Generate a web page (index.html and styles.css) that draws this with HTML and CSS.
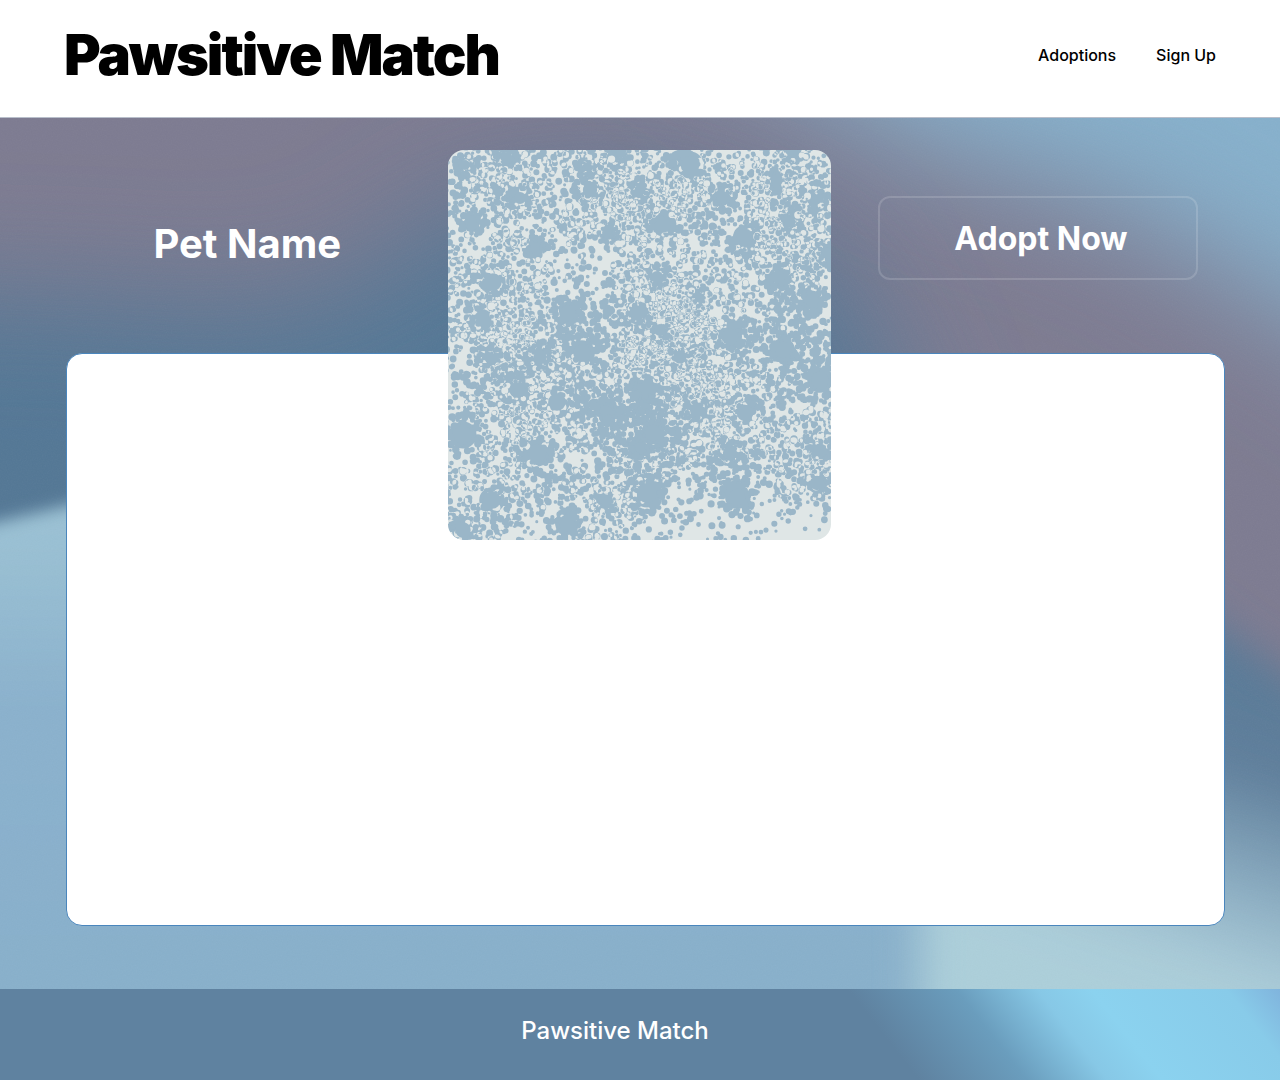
FILE: index.html
```html
<!DOCTYPE html>
<html lang="en">
<head>
  <meta charset="utf-8">
  <meta name="viewport" content="width=device-width, initial-scale=1">
  <title>Pawsitive Match</title>
  <link rel="stylesheet" href="styles.css">
</head>
<body>
  <header class="site-header">
    <h1 class="brand">Pawsitive Match</h1>
    <nav class="nav">
      <a class="nav-link" href="#">Adoptions</a>
      <a class="nav-link" href="#">Sign Up</a>
    </nav>
  </header>

  <main class="profile">
    <svg class="backdrop" viewBox="0 0 1280 871" preserveAspectRatio="none" aria-hidden="true">
      <defs>
        <linearGradient id="lake" x1="0" y1="0" x2="0" y2="1">
          <stop offset="0" stop-color="#9dc3d5"/>
          <stop offset="0.15" stop-color="#98bfd3"/>
          <stop offset="0.4" stop-color="#8ab1cd"/>
          <stop offset="1" stop-color="#87afcb"/>
        </linearGradient>
        <linearGradient id="shore" gradientUnits="userSpaceOnUse" x1="1290" y1="560" x2="1190" y2="871">
          <stop offset="0" stop-color="#587997"/>
          <stop offset="0.3" stop-color="#5e7e9b"/>
          <stop offset="0.7" stop-color="#90b2c6"/>
          <stop offset="0.9" stop-color="#a8cad8"/>
          <stop offset="1" stop-color="#accfda"/>
        </linearGradient>
        <filter id="soft" x="-30%" y="-50%" width="160%" height="200%"><feGaussianBlur stdDeviation="60"/></filter>
        <filter id="mid" x="-30%" y="-30%" width="160%" height="160%"><feGaussianBlur stdDeviation="20"/></filter>
        <filter id="crisp" x="-30%" y="-30%" width="160%" height="160%"><feGaussianBlur stdDeviation="8"/></filter>
        <filter id="grain" x="0" y="0" width="100%" height="100%">
          <feTurbulence type="fractalNoise" baseFrequency="0.8" numOctaves="2" seed="4"/>
          <feColorMatrix type="saturate" values="0"/>
        </filter>
      </defs>
      <rect width="1280" height="871" fill="#7d7b91"/>
      <path d="M-300 170 L100 180 L250 190 L370 160 L450 90 L600 70 L720 90 L830 140 L915 300 L915 800 L-300 800Z" fill="#527795" filter="url(#soft)"/>
      <path d="M560 -190 L1480 -190 L1480 320 L1290 190 L1120 90 L900 20Z" fill="#86b0cc" filter="url(#soft)"/>
      <path d="M-60 416 L-20 408 L66 388 L200 352 L1000 352 L1000 940 L-60 940Z" fill="url(#lake)" filter="url(#crisp)"/>
      <path d="M1100 430 L1225 512 L1290 560 L1400 640 L1400 980 L920 980 L920 700Z" fill="url(#shore)" filter="url(#mid)"/>
      <rect width="1280" height="871" filter="url(#grain)" opacity="0.05"/>
    </svg>

    <section class="hero">
      <h2 class="pet-name">Pet Name</h2>
      <canvas class="pet-photo" id="pet-photo" width="383" height="390" role="img" aria-label="Pet photo"></canvas>
      <button class="adopt" type="button">Adopt Now</button>
    </section>
    <section class="card"></section>
  </main>

  <footer class="site-footer">
    <p class="footer-brand">Pawsitive Match</p>
  </footer>
  <script src="splatter.js"></script>
</body>
</html>
```
FILE: styles.css
```css
* {
  box-sizing: border-box;
}

body {
  margin: 0;
  min-height: 100vh;
  display: flex;
  flex-direction: column;
  background: #fff;
  color: #000;
  font-family: Inter, "Liberation Sans", sans-serif;
}

.site-header {
  display: flex;
  align-items: center;
  justify-content: space-between;
  padding: 20px 64px 27px;
  border-bottom: 1px solid #b9bfcb;
}

.brand {
  margin: 0;
  font-size: 56px;
  line-height: 70px;
  font-weight: 900;
  letter-spacing: -2px;
}

.nav {
  display: flex;
  gap: 40px;
}

.nav-link {
  color: inherit;
  font-size: 16px;
  line-height: 24px;
  font-weight: 500;
  text-decoration: none;
}

.profile {
  position: relative;
  flex: 1;
  display: flex;
  flex-direction: column;
  padding: 32px 55px 63px 66px;
}

.backdrop {
  position: absolute;
  inset: 0;
  width: 100%;
  height: 100%;
}

.hero {
  position: relative;
  z-index: 1;
  display: grid;
  grid-template-columns: 33fr 33fr 34fr;
  align-items: start;
  justify-items: center;
  margin-bottom: -187px;
}

.pet-name {
  margin: 0;
  padding: 70px 20px 0 0;
  color: #fff;
  font-size: 40px;
  line-height: 48px;
  font-weight: 700;
}

.pet-photo {
  display: block;
  width: 100%;
  height: 390px;
  border-radius: 16px;
  background: #dfe6e6;
}

.adopt {
  width: 320px;
  max-width: 90%;
  margin: 46px 0 0 20px;
  padding: 21px 16px 19px 22px;
  border: 2px solid rgba(255, 255, 255, 0.15);
  border-radius: 12px;
  background: transparent;
  color: #fff;
  font: 700 32px/40px Inter, "Liberation Sans", sans-serif;
}

.card {
  position: relative;
  flex: 1;
  min-height: 480px;
  border: 1px solid #4a86bd;
  border-radius: 16px;
  background: #fff;
}

.site-footer {
  padding: 24px 50px 31px 0;
  background: linear-gradient(52deg, #5f82a0 68%, #6a9dbd 76%, #87c8e6 82%, #8bd2ef 86%, #88cbe9 96%, #80b4dd);
}

.footer-brand {
  margin: 0;
  color: #fff;
  font-size: 24px;
  line-height: 36px;
  font-weight: 500;
  text-align: center;
}
```
FILE: splatter.js
```js
// Paint splatter placeholder: x, y and core radius of every splat.
const splats = [
  [17, 15, 9], [59, 8, 10], [72, 48, 11], [24, 75, 9], [87, 97, 9], [45, 132, 16],
  [142, 40, 13], [139, 17, 8], [159, 83, 9], [242, 15, 17], [215, 75, 14], [274, 47, 11],
  [297, 87, 15], [329, 30, 11], [342, 72, 10], [369, 50, 8], [379, 103, 10], [330, 127, 12],
  [364, 150, 12], [35, 170, 13], [120, 163, 14], [189, 163, 14], [209, 127, 11], [282, 187, 15],
  [335, 200, 15], [42, 208, 10], [92, 207, 12], [134, 203, 16], [212, 180, 11], [232, 207, 12],
  [69, 240, 14], [109, 252, 16], [199, 237, 13], [157, 260, 9], [249, 260, 13], [297, 263, 15],
  [372, 230, 16], [15, 285, 17], [89, 303, 17], [205, 283, 15], [282, 303, 13], [44, 350, 16],
  [119, 373, 15], [159, 350, 10], [199, 343, 18], [289, 347, 15], [369, 333, 13], [15, 380, 14],
  [172, 3, 9], [192, 40, 10], [252, 148, 9], [192, 297, 9], [345, 3, 9], [372, 300, 12]
];

let seed = 77;
function random() {
  seed = (seed * 1664525 + 1013904223) % 4294967296;
  return seed / 4294967296;
}

const ctx = document.getElementById("pet-photo").getContext("2d");
ctx.fillStyle = "#9ab6c8";

function dot(path, x, y, r) {
  path.moveTo(x + r, y);
  path.arc(x, y, r, 0, Math.PI * 2);
}

splats.forEach(([x, y, core], index) => {
  const path = new Path2D();
  const drops = y > 160 && y < 320 ? 170 : 120;
  dot(path, x, y, core * 0.8);
  for (let i = 0; i < 30; i++) {
    const angle = random() * Math.PI * 2;
    const distance = core * (0.6 + random() * 0.7);
    dot(path, x + Math.cos(angle) * distance, y + Math.sin(angle) * distance, 2 + random() * 2);
  }
  for (let i = 0; i < drops; i++) {
    const angle = random() * Math.PI * 2;
    const distance = core + Math.pow(random(), 0.8) * 38;
    const radius = 1.5 + random() * 2.2;
    dot(path, x + Math.cos(angle) * distance, y + Math.sin(angle) * distance, radius);
  }
  ctx.globalCompositeOperation = index % 3 ? "xor" : "source-over";
  ctx.fill(path);
});

// Solid centres stay visible where neighbouring splats cross them.
ctx.globalCompositeOperation = "source-over";
for (const [x, y, core] of splats) {
  const path = new Path2D();
  dot(path, x, y, core * 0.55);
  for (let i = 0; i < 22; i++) {
    const angle = random() * Math.PI * 2;
    const distance = core * (0.4 + random() * 0.9);
    dot(path, x + Math.cos(angle) * distance, y + Math.sin(angle) * distance, 1 + random() * core * 0.18);
  }
  ctx.fill(path);
}
```
